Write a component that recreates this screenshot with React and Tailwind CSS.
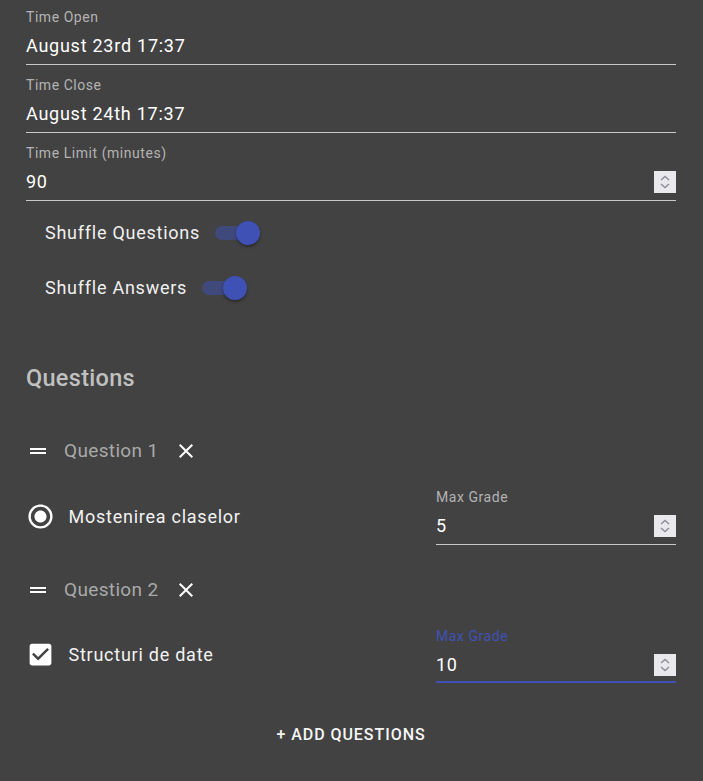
import React from "react";

const font = { fontFamily: "Roboto, 'Liberation Sans', sans-serif" };

const Spinner = () => (
	<div className="w-[22px] h-[22px] bg-[#e9e9ed] flex items-center justify-center">
		<svg width="14" height="16" viewBox="0 0 14 16" fill="none" stroke="#8e8c9a" strokeWidth="1.4">
			<path d="M3 6 L7 2.5 L11 6" />
			<path d="M3 10 L7 13.5 L11 10" />
		</svg>
	</div>
);

const Field = ({ label, value, number, focused, className = "" }) => (
	<div className={`flex flex-col ${className}`}>
		<div
			className={`text-[14px] tracking-[0.55px] leading-[20px] ${focused ? "text-[#3f51b5]" : "text-[#b3b3b3]"}`}>
			{label}
		</div>
		<div
			className={`mt-[7px] flex items-center justify-between h-[24px] ${focused ? "pb-[4px] border-b-2 border-[#3f51b5]" : "pb-[6px] border-b border-[#c8c8c8]"} box-content`}>
			<span className="text-[18px] tracking-[0.75px] leading-[24px] text-white">{value}</span>
			{number && <Spinner />}
		</div>
	</div>
);

const Toggle = ({ label }) => (
	<div className="h-[55px] flex items-center pl-[19px]">
		<span className="text-[18px] tracking-[0.75px] text-[#f0f0f0]">{label}</span>
		<div className="relative ml-[15px] w-[45px] h-[24px] flex items-center">
			<div className="w-[40px] h-[14px] rounded-full bg-[#40497b]" />
			<div className="absolute right-0 top-0 w-[24px] h-[24px] rounded-full bg-[#3f51b5] shadow-[0_2px_3px_rgba(0,0,0,0.35)]" />
		</div>
	</div>
);

const DragIcon = () => (
	<svg width="24" height="24" viewBox="0 0 24 24" fill="#ffffff">
		<path d="M20 9H4v2h16V9zM4 15h16v-2H4v2z" />
	</svg>
);

const CloseIcon = () => (
	<svg width="24" height="24" viewBox="0 0 24 24" fill="#ffffff">
		<path d="M19 6.41L17.59 5 12 10.59 6.41 5 5 6.41 10.59 12 5 17.59 6.41 19 12 13.41 17.59 19 19 17.59 13.41 12z" />
	</svg>
);

const RadioIcon = () => (
	<svg width="29" height="29" viewBox="0 0 24 24" fill="#ffffff">
		<path d="M12 7c-2.76 0-5 2.24-5 5s2.24 5 5 5 5-2.24 5-5-2.24-5-5-5zm0-5C6.48 2 2 6.48 2 12s4.48 10 10 10 10-4.48 10-10S17.52 2 12 2zm0 18c-4.42 0-8-3.58-8-8s3.58-8 8-8 8 3.58 8 8-3.58 8-8 8z" />
	</svg>
);

const CheckIcon = () => (
	<svg width="29" height="29" viewBox="0 0 24 24" fill="#ffffff">
		<path d="M19 3H5c-1.11 0-2 .9-2 2v14c0 1.1.89 2 2 2h14c1.11 0 2-.9 2-2V5c0-1.1-.89-2-2-2zm-9 14l-5-5 1.41-1.41L10 14.17l7.59-7.59L19 8l-9 9z" />
	</svg>
);

const Question = ({ n, answer, grade, icon, focused, className = "" }) => (
	<div className={className}>
		<div className="h-[40px] flex items-center">
			<DragIcon />
			<span className="ml-[14px] text-[19px] tracking-[0.35px] text-[#a9a9a9]">Question {n}</span>
			<span className="ml-[15px]">
				<CloseIcon />
			</span>
		</div>
		<div className="mt-[16px] flex items-center">
			<div className="flex-1 flex items-center">
				<span className="ml-[-0.5px]">{icon}</span>
				<span className="ml-[14px] text-[18px] tracking-[0.75px] text-[#f2f2f2]">{answer}</span>
			</div>
			<Field
				label="Max Grade"
				value={grade}
				number
				focused={focused}
				className="w-[240px]"
			/>
		</div>
	</div>
);

export default function App() {
	return (
		<div className="min-h-screen bg-[#424242] pl-[26px] pr-[27px]" style={font}>
			<Field label="Time Open" value="August 23rd 17:37" className="pt-[7px]" />
			<Field label="Time Close" value="August 24th 17:37" className="mt-[10px]" />
			<Field label="Time Limit (minutes)" value="90" number className="mt-[10px]" />
			<div className="mt-[4px]">
				<Toggle label="Shuffle Questions" />
				<Toggle label="Shuffle Answers" />
			</div>
			<h2 className="mt-[47px] text-[23.5px] tracking-[0.3px] leading-[32px] font-medium text-[#c0c0c0]">
				Questions
			</h2>
			<Question
				n={1}
				answer="Mostenirea claselor"
				grade="5"
				icon={<RadioIcon />}
				className="mt-[37px]"
			/>
			<Question
				n={2}
				answer="Structuri de date"
				grade="10"
				icon={<CheckIcon />}
				focused
				className="mt-[25px]"
			/>
			<div className="mt-[34px] pb-[28px] flex justify-center">
				<button className="h-[36px] px-2 text-[16px] font-medium tracking-[0.95px] text-[#f5f5f5] uppercase">
					+ Add Questions
				</button>
			</div>
		</div>
	);
}
